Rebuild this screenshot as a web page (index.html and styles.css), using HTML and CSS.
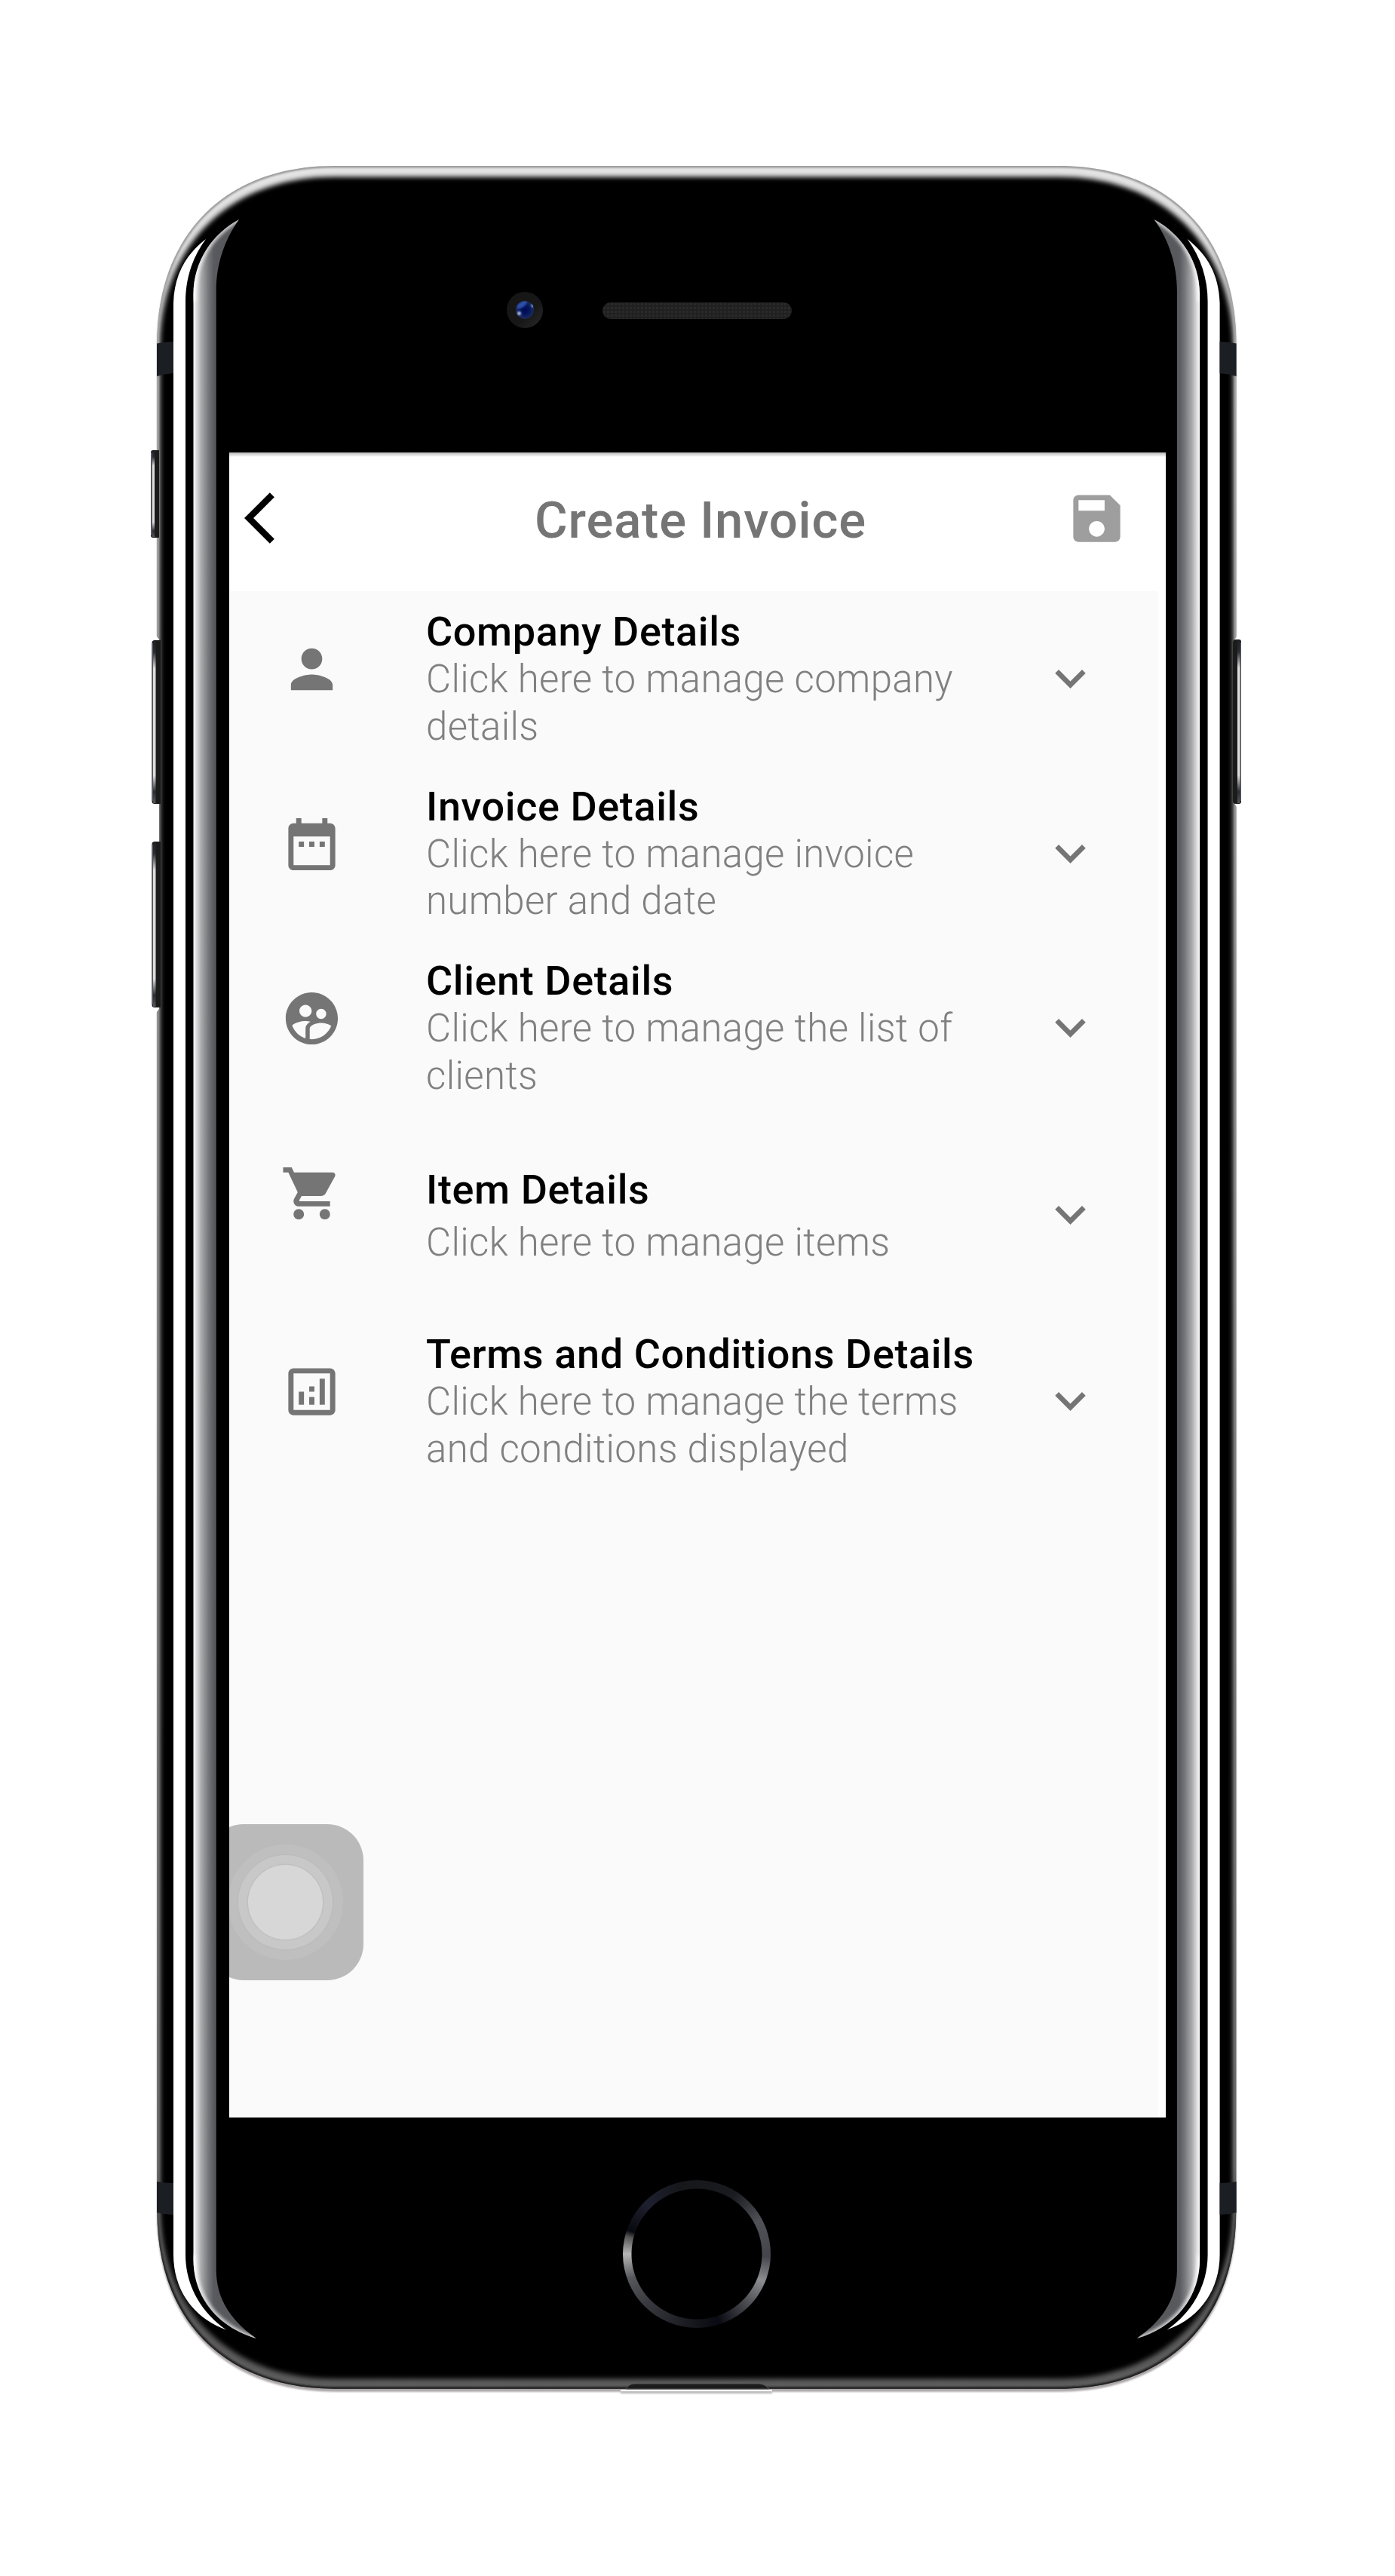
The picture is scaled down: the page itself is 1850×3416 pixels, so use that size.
FILE: index.html
```html
<!DOCTYPE html>
<html lang="en">
<head>
<meta charset="utf-8">
<title>Create Invoice</title>
<link rel="stylesheet" href="styles.css">
</head>
<body>
<div class="phone">
  <svg class="shell" viewBox="0 0 1850 3416" aria-hidden="true">
    <defs>
      <path id="body" d="M208.300 455C208.300 311 299 220 443 220H1404.600C1548.600 220 1639.300 311 1639.300 455V2933C1639.300 3077 1548.600 3167.700 1404.600 3167.700H443C299 3167.700 208.300 3077 208.300 2933Z"/>
      <clipPath id="bodyClip"><use href="#body"/></clipPath>
      <linearGradient id="rim" x1="0" y1="220" x2="0" y2="3168" gradientUnits="userSpaceOnUse">
        <stop offset="0" stop-color="#e4e4e4"/><stop offset=".04" stop-color="#ddd"/><stop offset=".09" stop-color="#999"/>
        <stop offset=".9" stop-color="#8a8a8a"/><stop offset=".96" stop-color="#5a5a5a"/><stop offset="1" stop-color="#5c5c5c"/>
      </linearGradient>
      <linearGradient id="edge" x1="0" y1="220" x2="0" y2="3168" gradientUnits="userSpaceOnUse">
        <stop offset="0" stop-color="#999"/><stop offset=".1" stop-color="#aaa"/>
        <stop offset=".9" stop-color="#666"/><stop offset=".95" stop-color="#1c1c1c"/><stop offset="1" stop-color="#1c1c1c"/>
      </linearGradient>
      <linearGradient id="chrome" x1="256" y1="0" x2="287" y2="0" gradientUnits="userSpaceOnUse">
        <stop offset="0" stop-color="#fff"/><stop offset=".12" stop-color="#e2e2e3"/><stop offset=".35" stop-color="#a9aaac"/>
        <stop offset=".65" stop-color="#77787c"/><stop offset=".88" stop-color="#5a5b60"/><stop offset="1" stop-color="#58595d"/>
      </linearGradient>
      <linearGradient id="glint" x1="0" y1="0" x2="0" y2="1">
        <stop offset="0" stop-color="#1e2026"/><stop offset=".07" stop-color="#2b2d33"/><stop offset=".17" stop-color="#ddd"/>
        <stop offset=".83" stop-color="#ddd"/><stop offset=".93" stop-color="#2b2d33"/><stop offset="1" stop-color="#55575c"/>
      </linearGradient>
      <path id="strip" d="M256.500 390C257 345 282 310 317 291C297 319 286.700 352 286.700 385V3010C287 3050 307 3078 340 3101C288 3086 256.500 3046 256.500 2996Z"/>
      <clipPath id="stripClip"><use href="#strip"/></clipPath>
      <filter id="b3" x="-5%" y="-5%" width="110%" height="110%"><feGaussianBlur stdDeviation="3"/></filter>
      <filter id="b2" x="-50%" y="-5%" width="200%" height="110%"><feGaussianBlur stdDeviation="2"/></filter>
      <filter id="b1" x="-50%" y="-50%" width="200%" height="200%"><feGaussianBlur stdDeviation="1.300"/></filter>
      <pattern id="mesh" width="5" height="5" x="799" y="401" patternUnits="userSpaceOnUse">
        <rect width="5" height="5" fill="#202020"/><rect x="1" y="1" width="3" height="3" fill="#2a2a2a"/>
      </pattern>
      <radialGradient id="lens"><stop offset="0" stop-color="#000a52"/><stop offset=".45" stop-color="#04145c"/><stop offset="1" stop-color="#1c2c5c"/></radialGradient>
      <linearGradient id="lensRing" x1="0" y1="0" x2="1" y2="1"><stop offset="0" stop-color="#161616"/><stop offset=".6" stop-color="#171717"/><stop offset="1" stop-color="#2a2a2a"/></linearGradient>
      <clipPath id="lensClip"><circle cx="696" cy="411" r="12"/></clipPath>
      <g id="side">
        <path d="M230 402C231 365 246 338 273 317C255 341 246 370 246 400V2990C246 3030 266 3066 300 3089.500C256 3074 230 3036 230 2990Z" fill="#fff"/>
        <use href="#strip" fill="url(#chrome)"/>
        <g clip-path="url(#stripClip)">
          <path d="M256.500 400C256.500 345 282 310 318 290" fill="none" stroke="#fff" stroke-opacity=".75" stroke-width="6" filter="url(#b2)"/>
          <path d="M341 3102C288 3086 256.500 3046 256.500 2990" fill="none" stroke="#fff" stroke-opacity=".75" stroke-width="6" filter="url(#b2)"/>
        </g>
        <path d="M208 455.500Q219 453 230 453V495Q219 495.500 208 499ZM208 2893Q219 2895 230 2895V2937Q219 2937 208 2934Z" fill="#1b1f23"/>
      </g>
    </defs>

    <use href="#body" y="4" fill="#aaa5a8" filter="url(#b1)"/>
    <use href="#body" fill="url(#rim)"/>
    <g clip-path="url(#bodyClip)">
      <path filter="url(#b3)" d="M212.500 462C212.500 325 305 234.500 443 234.500H1404.600C1542.600 234.500 1635.100 325 1635.100 462V2926C1635.100 3063 1542.600 3154.500 1404.600 3154.500H443C305 3154.500 212.500 3063 212.500 2926Z"/>
      <use href="#body" fill="none" stroke="url(#edge)" stroke-width="5" filter="url(#b1)"/>
    </g>
    <path d="M830 3168Q834 3161 842 3161H1006Q1014 3161 1020 3168Z" fill="#1c1c1c" stroke="#555" stroke-width="1"/>
    <rect x="823" y="3171" width="201" height="3" fill="#bbb8ba" filter="url(#b1)"/>
    <rect x="823" y="3169" width="201" height="2" fill="#fff"/>

    <use href="#side"/>
    <use href="#side" transform="translate(1847.600) scale(-1 1)"/>

    <path d="M206 842L211 848V1338L206 1344ZM1641 843L1637.500 848V1066L1641 1072Z" fill="#fff"/>
    <g fill="#1b1b1b">
      <path d="M211 597H203Q200 597 200 600V710Q200 713 203 713H211Z"/>
      <path d="M213 849H205Q201.500 849 201.500 852.500V1062.500Q201.500 1066 205 1066H213Z"/>
      <path d="M213 1116H205Q201.500 1116 201.500 1119.500V1332.500Q201.500 1336 205 1336H213Z"/>
      <path d="M1635 852Q1635 848 1639 848H1643Q1646 848 1646 851V1063Q1646 1066 1643 1066H1639Q1635 1066 1635 1062Z"/>
    </g>
    <g fill="#55585c">
      <rect x="200" y="600" width="2" height="110"/><rect x="201.500" y="853" width="1.500" height="209"/>
      <rect x="201.500" y="1120" width="1.500" height="212"/><rect x="1644.500" y="852" width="1.500" height="210"/>
    </g>
    <g fill="url(#glint)">
      <rect x="202" y="598" width="3" height="114"/><rect x="203" y="850" width="3.500" height="215"/>
      <rect x="203" y="1117" width="3.500" height="218"/><rect x="1641" y="849" width="3.500" height="216"/>
    </g>

    <circle cx="696" cy="411" r="24" fill="url(#lensRing)"/>
    <g clip-path="url(#lensClip)">
      <circle cx="696" cy="411" r="12" fill="url(#lens)"/>
      <ellipse cx="692" cy="404" rx="8" ry="3.500" fill="#2f4fa8" transform="rotate(-35 692 404)" filter="url(#b1)"/>
      <circle cx="707" cy="405" r="2.500" fill="#6fb4e6" filter="url(#b1)"/>
      <circle cx="688.500" cy="415.500" r="2.500" fill="#a9bcda" filter="url(#b1)"/>
    </g>
    <rect x="799" y="401" width="251" height="22" rx="11" fill="url(#mesh)"/>
  </svg>

  <main class="screen">
    <header class="appbar">
      <svg class="back" viewBox="0 0 24 24"><path d="M11.670 3.870L9.900 2.100 0 12l9.900 9.900 1.770-1.770L3.540 12z"/></svg>
      <h1 class="heading">Create Invoice</h1>
      <svg class="save" viewBox="0 0 24 24"><path d="M17 3H5c-1.110 0-2 .9-2 2v14c0 1.100.89 2 2 2h14c1.100 0 2-.9 2-2V7l-4-4zm-5 16c-1.660 0-3-1.340-3-3s1.340-3 3-3 3 1.340 3 3-1.340 3-3 3zm3-10H5V5h10v4z"/></svg>
    </header>
    <section class="list">
      <article class="row">
        <svg class="icon" viewBox="0 0 24 24"><path d="M12 12c2.210 0 4-1.790 4-4s-1.790-4-4-4-4 1.790-4 4 1.790 4 4 4zm0 2c-2.670 0-8 1.340-8 4v2h16v-2c0-2.660-5.330-4-8-4z"/></svg>
        <div class="text"><h2 class="title">Company Details</h2><p class="sub">Click here to manage company<br>details</p></div>
        <svg class="chevron" viewBox="0 0 24 24"><path d="M16.590 8.590L12 13.170 7.410 8.590 6 10l6 6 6-6z"/></svg>
      </article>
      <article class="row">
        <svg class="icon" viewBox="0 0 24 24"><path d="M9 11H7v2h2v-2zm4 0h-2v2h2v-2zm4 0h-2v2h2v-2zm2-7h-1V2h-2v2H8V2H6v2H5c-1.110 0-1.990.9-1.990 2L3 20c0 1.100.89 2 2 2h14c1.100 0 2-.9 2-2V6c0-1.100-.9-2-2-2zm0 16H5V9h14v11z"/></svg>
        <div class="text"><h2 class="title">Invoice Details</h2><p class="sub">Click here to manage invoice<br>number and date</p></div>
        <svg class="chevron" viewBox="0 0 24 24"><path d="M16.590 8.590L12 13.170 7.410 8.590 6 10l6 6 6-6z"/></svg>
      </article>
      <article class="row">
        <svg class="icon" viewBox="0 0 24 24"><path d="M11.990 2c-5.520 0-10 4.480-10 10s4.480 10 10 10 10-4.480 10-10-4.480-10-10-10zm3.610 6.340c1.070 0 1.930.86 1.930 1.930 0 1.070-.86 1.930-1.930 1.930-1.070 0-1.930-.86-1.930-1.930-.01-1.070.86-1.930 1.930-1.930zm-6-1.580c1.300 0 2.360 1.060 2.360 2.360 0 1.300-1.060 2.360-2.360 2.360s-2.360-1.060-2.360-2.360c0-1.310 1.050-2.360 2.360-2.360zm0 9.130v3.750c-2.400-.75-4.300-2.600-5.140-4.960 1.050-1.120 3.670-1.690 5.140-1.690.53 0 1.200.08 1.900.22-1.640.87-1.900 2.020-1.900 2.680zM11.990 20c-.27 0-.53-.01-.79-.04v-4.070c0-1.420 2.940-2.130 4.400-2.130 1.070 0 2.920.39 3.840 1.150-1.170 2.970-4.060 5.090-7.450 5.090z"/></svg>
        <div class="text"><h2 class="title">Client Details</h2><p class="sub">Click here to manage the list of<br>clients</p></div>
        <svg class="chevron" viewBox="0 0 24 24"><path d="M16.590 8.590L12 13.170 7.410 8.590 6 10l6 6 6-6z"/></svg>
      </article>
      <article class="row row-single">
        <svg class="icon" viewBox="0 0 24 24"><path d="M7 18c-1.100 0-1.990.9-1.990 2S5.900 22 7 22s2-.9 2-2-.9-2-2-2zM1 2v2h2l3.600 7.590-1.350 2.450c-.16.28-.25.61-.25.96 0 1.100.9 2 2 2h12v-2H7.420c-.14 0-.25-.11-.25-.25l.03-.12.9-1.630h7.450c.75 0 1.410-.41 1.750-1.030l3.580-6.490c.08-.14.12-.31.12-.48 0-.55-.45-1-1-1H5.210l-.94-2H1zm16 16c-1.100 0-1.990.9-1.990 2s.89 2 1.990 2 2-.9 2-2-.9-2-2-2z"/></svg>
        <div class="text"><h2 class="title">Item Details</h2><p class="sub">Click here to manage items</p></div>
        <svg class="chevron" viewBox="0 0 24 24"><path d="M16.590 8.590L12 13.170 7.410 8.590 6 10l6 6 6-6z"/></svg>
      </article>
      <article class="row">
        <svg class="icon" viewBox="0 0 24 24"><path d="M19 3H5c-1.100 0-2 .9-2 2v14c0 1.100.9 2 2 2h14c1.100 0 2-.9 2-2V5c0-1.100-.9-2-2-2zm0 16H5V5h14v14zM7 12h2v5H7zM15 7h2v10h-2zM11 14h2v3h-2zM11 10h2v2h-2z"/></svg>
        <div class="text"><h2 class="title">Terms and Conditions Details</h2><p class="sub">Click here to manage the terms<br>and conditions displayed</p></div>
        <svg class="chevron" viewBox="0 0 24 24"><path d="M16.590 8.590L12 13.170 7.410 8.590 6 10l6 6 6-6z"/></svg>
      </article>
    </section>
    <div class="assist"><span class="assist-dot"></span></div>
  </main>
  <div class="home"></div>
</div>
</body>
</html>
```

FILE: styles.css
```css
* { box-sizing: border-box; }

body {
  margin: 0;
  background: #fff;
  font-family: Roboto, sans-serif;
}

h1, h2, p { margin: 0; }

svg { display: block; flex: none; }

.phone {
  position: relative;
  width: 1850px;
  height: 3416px;
  padding: 600px 304px 0;
  overflow: hidden;
}

.shell {
  position: absolute;
  inset: 0;
  width: 1850px;
  height: 3416px;
}

.screen {
  position: relative;
  display: flex;
  flex-direction: column;
  width: 1242px;
  height: 2208px;
  overflow: hidden;
  background: #fff;
}

.appbar {
  display: flex;
  align-items: center;
  height: 184px;
  padding: 0 50px 10px 20px;
  background: linear-gradient(#b8b8b8, #cfcfcf 2px, #fff 6px);
}

.back { width: 82px; height: 82px; }

.heading {
  flex: 1;
  padding: 6px 0 0 39px;
  text-align: center;
  font-size: 67px;
  font-weight: 500;
  line-height: 80px;
  letter-spacing: .8px;
  color: #757575;
  white-space: nowrap;
}

.save { width: 83px; height: 83px; fill: #9e9e9e; }

.list {
  flex: 1;
  margin: 0 10px 0 1px;
  background: #fafafa;
}

.row {
  display: flex;
  align-items: center;
  height: 231.5px;
  padding: 0 76px 0 67px;
}

.row-single { height: 263.5px; }

.icon {
  align-self: flex-start;
  width: 83px;
  height: 83px;
  margin-top: 62px;
  fill: #757575;
}

.text {
  flex: 1;
  padding: 2px 0 0 110px;
  white-space: nowrap;
}

.title {
  font-size: 54px;
  font-weight: 500;
  line-height: 64px;
  letter-spacing: .6px;
  color: #000;
}

.sub {
  font-size: 51px;
  font-weight: 300;
  line-height: 62.300px;
  letter-spacing: .33px;
  color: #808080;
}

.row-single .text { padding-top: 5px; }
.row-single .title { line-height: 70px; }
.row-single .sub { line-height: 70px; }

.chevron { width: 81px; height: 81px; fill: #757575; }

.assist {
  position: absolute;
  left: -29px;
  top: 1819px;
  width: 207px;
  height: 207px;
  border-radius: 48px;
  background: #bababa;
  display: grid;
  place-items: center;
}

.assist-dot {
  width: 99px;
  height: 99px;
  border-radius: 50%;
  background: #d7d7d7;
  box-shadow: 0 0 0 1.500px #c0c0c0, 0 0 0 13px #c8c8c8, 0 0 0 14.500px #bcbcbc, 0 0 0 27px #bfbfbf;
}

.home {
  position: relative;
  width: 196px;
  height: 196px;
  margin: 83px 0 0 522px;
  border-radius: 50%;
  background:
    radial-gradient(circle, #000 86px, transparent 87px),
    conic-gradient(#17181c 0deg, #1a1b20 32deg, #505156 62deg, #45464b 92deg, #8c8d90 112deg, #4a4b50 135deg, #090a12 162deg, #16171c 182deg, #38393e 225deg, #56575b 250deg, #b5b5b5 270deg, #555 284deg, #08090e 289deg, #1e2030 315deg, #16171b 345deg, #17181c 360deg);
}
```
